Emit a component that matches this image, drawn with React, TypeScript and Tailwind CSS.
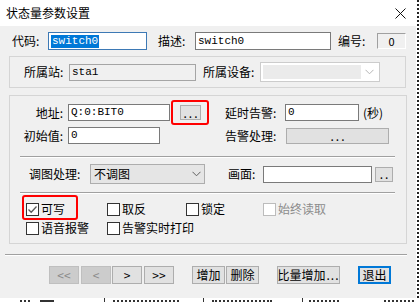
import React from 'react';

const cjk = "font-['Microsoft_YaHei','Noto_Sans_CJK_SC',sans-serif]";
const mono = "font-['Liberation_Mono','Noto_Sans_CJK_SC',monospace]";

function Chevron({ color = '#606060' }: { color?: string }) {
  return (
    <svg width="9" height="6" viewBox="0 0 9 6" className="shrink-0">
      <polyline points="0.5,0.8 4.5,4.8 8.5,0.8" fill="none" stroke={color} strokeWidth="1" />
    </svg>
  );
}

function Edit({ w, h = 'h-[17px]', value, border = 'border-[#7a7a7a]', bg = 'bg-white' }: { w: string; h?: string; value?: React.ReactNode; border?: string; bg?: string }) {
  return (
    <div className={`${w} ${h} ${bg} border ${border} flex items-center pl-[2px] text-[11px] leading-none ${mono} overflow-hidden shrink-0`}>
      {value}
    </div>
  );
}

function Btn({ w, label, disabled = false, focus = false, h = 'h-[18px]', dots = false }: { w: string; label: string; disabled?: boolean; focus?: boolean; h?: string; dots?: boolean }) {
  const tone = disabled
    ? 'bg-[#cccccc] border border-[#bfbfbf] text-[#8a8a8a]'
    : focus
      ? 'bg-[#e1e1e1] border-2 border-[#0078d7] text-black'
      : 'bg-[#e1e1e1] border border-[#adadad] text-black';
  return (
    <div className={`${w} ${h} ${tone} flex items-center justify-center text-[12px] leading-none whitespace-nowrap shrink-0 ${dots ? 'tracking-[2px] pl-[2px]' : ''}`}>
      {label}
    </div>
  );
}

function Check({ label, checked = false, disabled = false, w }: { label: string; checked?: boolean; disabled?: boolean; w: string }) {
  return (
    <div className={`${w} flex items-center shrink-0`}>
      <div className={`w-[13px] h-[13px] bg-white border ${disabled ? 'border-[#bcbcbc]' : 'border-[#333333]'} flex items-center justify-center`}>
        {checked && (
          <svg width="11" height="11" viewBox="0 0 11 11">
            <polyline points="1.5,5.5 4.2,8.2 9.5,2.5" fill="none" stroke="#5a5a5a" strokeWidth="1.3" />
          </svg>
        )}
      </div>
      <span className={`ml-[2px] text-[12px] whitespace-nowrap ${disabled ? 'text-[#8c8c8c]' : 'text-black'}`}>{label}</span>
    </div>
  );
}

function Etched({ w, className = '' }: { w: string; className?: string }) {
  return <div className={`${w} h-[2px] border-t border-[#a0a0a0] border-b border-b-white ${className}`} />;
}

export default function App() {
  return (
    <div className={`w-[419px] h-[302px] bg-white flex flex-col overflow-hidden ${cjk}`}>
      <div className="flex">
        <div className="w-[416px] h-[298px] bg-[#f0f0f0] flex flex-col shrink-0">
          {/* title bar */}
          <div className="h-[26px] bg-white flex items-center justify-between pl-[6px] pr-[10px]">
            <span className="text-[12px] text-black">状态量参数设置</span>
            <svg width="11" height="11" viewBox="0 0 11 11">
              <path d="M0.5 0.5 L10.5 10.5 M10.5 0.5 L0.5 10.5" stroke="#111" strokeWidth="1" />
            </svg>
          </div>

          {/* code / desc / number */}
          <div className="mt-[6px] h-[18px] flex items-center text-[12px]">
            <span className="ml-[12px] w-[36px]">代码:</span>
            <div className={`w-[99px] h-[18px] bg-white border border-[#3d79b5] flex items-center pl-[2px] text-[11px] leading-none ${mono}`}>
              <span className="bg-[#0078d7] text-white h-[13px] flex items-center px-[1px]">switch0</span>
            </div>
            <span className="ml-[11px] w-[37px]">描述:</span>
            <Edit w="w-[136px]" h="h-[18px]" value="switch0" />
            <span className="ml-[7px] w-[39px]">编号:</span>
            <div className="w-[29px] h-[16px] border border-t-[#a0a0a0] border-l-[#a0a0a0] border-r-white border-b-white flex items-center justify-center text-[11px] leading-none">
              0
            </div>
          </div>

          {/* station group */}
          <div className="mt-[6px] ml-[9px] w-[397px] h-[32px] border border-[#d5d5d5] flex items-center text-[12px]">
            <span className="ml-[14px] w-[45px]">所属站:</span>
            <Edit w="w-[127px]" value="sta1" border="border-[#a5a5a5]" bg="bg-[#f0f0f0]" />
            <span className="ml-[7px] w-[57px]">所属设备:</span>
            <div className="w-[120px] h-[20px] bg-white border border-[#cccccc] p-[2px] flex items-center">
              <div className="flex-1 h-full bg-[#ebebeb]" />
              <div className="w-[16px] flex justify-center">
                <Chevron color="#b5b5b5" />
              </div>
            </div>
          </div>

          {/* main group */}
          <div className="mt-[7px] ml-[9px] w-[398px] h-[149px] border border-[#d5d5d5] flex flex-col text-[12px]">
            <div className="mt-[8px] h-[17px] flex items-center">
              <span className="w-[58px] text-right pr-[5px]">地址:</span>
              <Edit w="w-[102px]" value="Q:0:BIT0" />
              <div className="relative ml-[10px]">
                <Btn w="w-[21px]" h="h-[15px]" label="..." dots />
                <div className="absolute -left-[9px] -top-[5px] w-[38px] h-[25px] border-2 border-[#ff0000] rounded-[3px]" />
              </div>
              <span className="ml-[24px] w-[60px]">延时告警:</span>
              <Edit w="w-[74px]" value="0" />
              <span className="ml-[4px]">(秒)</span>
            </div>
            <div className="mt-[6px] h-[17px] flex items-center">
              <span className="w-[58px] text-right pr-[5px]">初始值:</span>
              <Edit w="w-[92px]" value="0" />
              <span className="ml-[65px] w-[61px]">告警处理:</span>
              <Btn w="w-[103px]" h="h-[16px]" label="..." dots />
            </div>
            <Etched w="w-[375px]" className="mt-[12px] ml-[10px]" />
            <div className="mt-[6px] h-[20px] flex items-center">
              <span className="ml-[19px] w-[61px]">调图处理:</span>
              <div className="w-[115px] h-[20px] bg-[#e5e5e5] border border-[#adadad] flex items-center pl-[3px] pr-[3px]">
                <span className="flex-1">不调图</span>
                <Chevron />
              </div>
              <span className="ml-[23px] w-[35px]">画面:</span>
              <Edit w="w-[109px]" />
              <div className="ml-[3px]">
                <Btn w="w-[18px]" h="h-[15px]" label=".." dots />
              </div>
            </div>
            <Etched w="w-[375px]" className="mt-[8px] ml-[10px]" />
            <div className="mt-[7px] h-[16px] flex items-center pl-[16px]">
              <div className="relative">
                <Check w="w-[81px]" label="可写" checked />
                <div className="absolute -left-[4px] -top-[5px] w-[56px] h-[25px] border-2 border-[#ff0000] rounded-[3px]" />
              </div>
              <Check w="w-[79px]" label="取反" />
              <Check w="w-[77px]" label="锁定" />
              <Check w="w-[90px]" label="始终读取" disabled />
            </div>
            <div className="mt-[3px] h-[16px] flex items-center pl-[16px]">
              <Check w="w-[81px]" label="语音报警" />
              <Check w="w-[120px]" label="告警实时打印" />
            </div>
          </div>

          <Etched w="w-[402px]" className="mt-[10px] ml-[5px]" />

          {/* bottom buttons */}
          <div className="mt-[10px] h-[18px] flex items-center">
            <div className="ml-[49px]"><Btn w="w-[30px]" label="<<" disabled /></div>
            <div className="ml-[2px]"><Btn w="w-[30px]" label="<" disabled /></div>
            <div className="ml-[1px]"><Btn w="w-[30px]" label=">" /></div>
            <div className="ml-[2px]"><Btn w="w-[30px]" label=">>" /></div>
            <div className="ml-[18px]"><Btn w="w-[33px]" label="增加" /></div>
            <div className="ml-[1px]"><Btn w="w-[33px]" label="删除" /></div>
            <div className="ml-[18px]">
              <div className="w-[63px] h-[18px] bg-[#e1e1e1] border border-[#adadad] flex items-center justify-center text-[12px] leading-none whitespace-nowrap">
                比量增加<span className="tracking-[1px] pl-[1px]">...</span>
              </div>
            </div>
            <div className="ml-[18px]"><Btn w="w-[33px]" label="退出" focus /></div>
          </div>
        </div>
        <div className="ml-[1px] w-[1px] h-[298px] border-l-2 border-dotted border-[#222]" />
      </div>
      <div className="h-[4px] flex items-end">
        <div className="ml-[20px] w-[10px] border-t-2 border-dotted border-[#333]" />
        <div className="ml-[10px] w-[14px] border-t-2 border-[#333]" />
        <div className="ml-[50px] w-[1px] h-[4px] bg-[#333]" />
        <div className="ml-[8px] w-[66px] border-t-2 border-dotted border-[#333]" />
        <div className="ml-[24px] w-[1px] h-[4px] bg-[#333]" />
        <div className="ml-[8px] w-[60px] border-t-2 border-dotted border-[#333]" />
        <div className="ml-[30px] w-[1px] h-[4px] bg-[#333]" />
        <div className="ml-[6px] w-[30px] border-t-2 border-dotted border-[#333]" />
        <div className="ml-[45px] w-[30px] border-t-2 border-dotted border-[#333]" />
      </div>
    </div>
  );
}
